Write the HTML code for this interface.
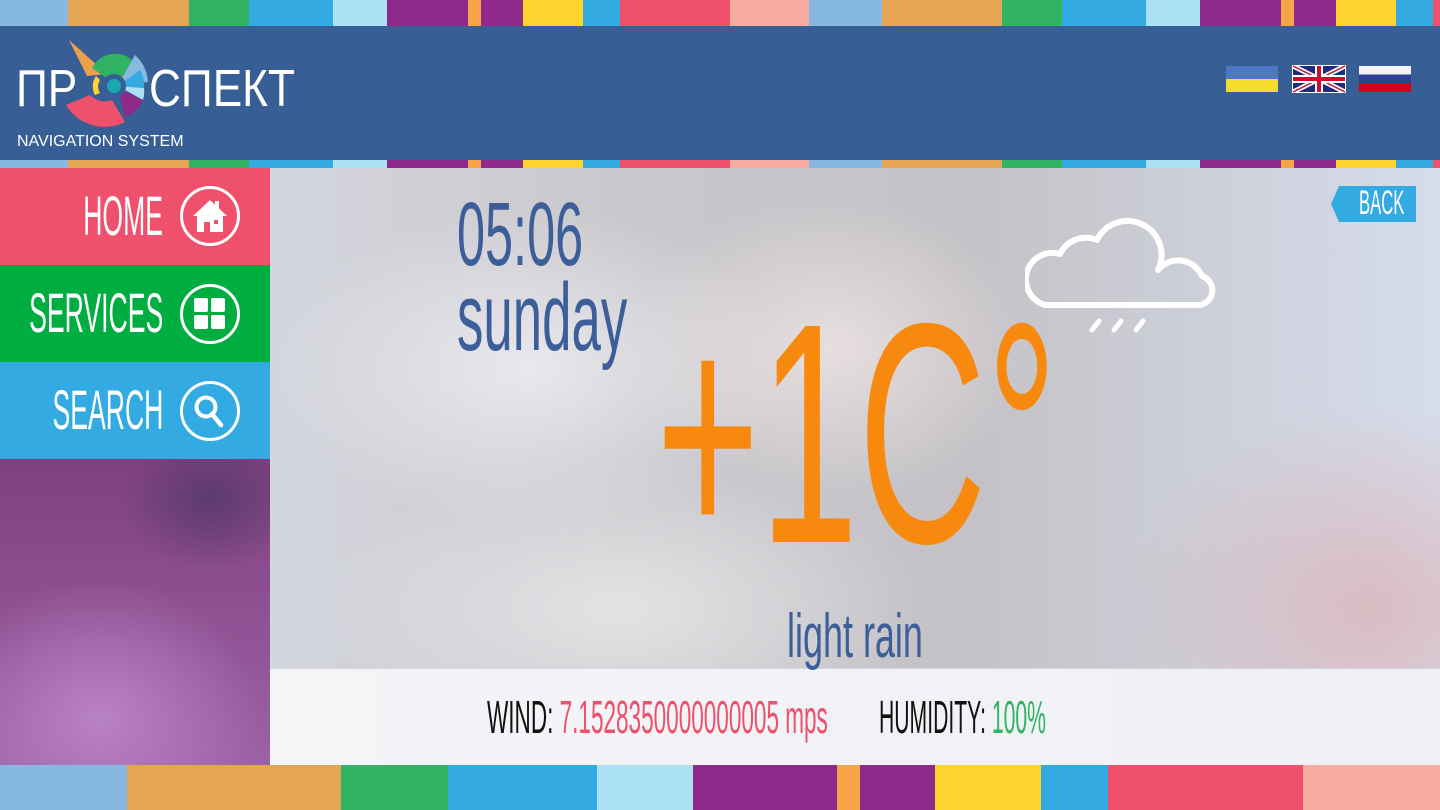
<!DOCTYPE html>
<html><head><meta charset="utf-8"><style>
*{margin:0;padding:0;box-sizing:border-box}
body{width:1440px;height:810px;overflow:hidden;position:relative;font-family:"Liberation Sans Narrow","Liberation Sans",sans-serif;background:#ccc}
.s{position:absolute;height:100%;top:0}
.strip{position:absolute;left:0;width:1440px;overflow:hidden}
.t{position:absolute;white-space:nowrap;line-height:1}
</style></head><body>
<div class="strip" style="top:0;height:26px">
<div class="s" style="left:0;width:68px;background:#86b8e0"></div><div class="s" style="left:68px;width:121px;background:#e6a553"></div><div class="s" style="left:189px;width:60px;background:#32b363"></div><div class="s" style="left:249px;width:84px;background:#34aae2"></div><div class="s" style="left:333px;width:54px;background:#ace0f5"></div><div class="s" style="left:387px;width:81px;background:#8f2a8a"></div><div class="s" style="left:468px;width:13px;background:#f7a347"></div><div class="s" style="left:481px;width:42px;background:#8f2a8a"></div><div class="s" style="left:523px;width:60px;background:#fed52f"></div><div class="s" style="left:583px;width:37px;background:#34aae2"></div><div class="s" style="left:620px;width:110px;background:#ef506b"></div><div class="s" style="left:730px;width:79px;background:#f7aba1"></div><div class="s" style="left:809px;width:73px;background:#86b8e0"></div><div class="s" style="left:882px;width:120px;background:#e6a553"></div><div class="s" style="left:1002px;width:60px;background:#32b363"></div><div class="s" style="left:1062px;width:84px;background:#34aae2"></div><div class="s" style="left:1146px;width:54px;background:#ace0f5"></div><div class="s" style="left:1200px;width:81px;background:#8f2a8a"></div><div class="s" style="left:1281px;width:13px;background:#f7a347"></div><div class="s" style="left:1294px;width:42px;background:#8f2a8a"></div><div class="s" style="left:1336px;width:60px;background:#fed52f"></div><div class="s" style="left:1396px;width:37px;background:#34aae2"></div><div class="s" style="left:1433px;width:7px;background:#ef506b"></div>
</div>
<div class="strip" style="top:160px;height:8px" id="s2"></div>
<div style="position:absolute;top:26px;left:0;width:1440px;height:134px;background:#375f96"></div>
<!-- logo -->
<svg style="position:absolute;left:60px;top:36px" width="100" height="92" viewBox="60 36 100 92">
<path d="M69 40 L87 76 L107 74 Z" fill="#f7a347" opacity=".95"/>
<path d="M92 68 A26 26 0 0 1 140 72 L115 84 Z" fill="#32b363"/>
<path d="M135 55 A40 40 0 0 1 148 82 L118 85 Z" fill="#86b8e0"/>
<path d="M140 70 A30 30 0 0 1 144 88 L118 86 Z" fill="#34aae2"/>
<path d="M118 86 L144 88 A30 30 0 0 1 143 100 Z" fill="#ace0f5"/>
<path d="M118 88 L143 100 A30 30 0 0 1 125 117 Z" fill="#8f2a8a"/>
<path d="M66 105 A45 45 0 0 0 125 122 L112 100 A20 20 0 0 1 90 95 Z" fill="#ef506b"/>
<path d="M96 76 A18 18 0 0 0 95 95 L100 93 A12 12 0 0 1 100 80 Z" fill="#fed52f"/>
<circle cx="114" cy="86" r="12" fill="#375f96"/><circle cx="114" cy="86" r="7" fill="#1aa8b0"/>
</svg>
<div class="t" style="left:16px;top:63px;color:#fff;font-family:'Liberation Sans',sans-serif;font-size:52px;transform:scaleX(.85);transform-origin:left">ПР</div>
<div class="t" style="left:149px;top:63px;color:#fff;font-family:'Liberation Sans',sans-serif;font-size:52px;transform:scaleX(.85);transform-origin:left">СПЕКТ</div>
<div class="t" style="left:17px;top:134px;color:#fff;font-family:'Liberation Sans',sans-serif;font-size:16px">NAVIGATION SYSTEM</div>
<!-- flags -->
<div style="position:absolute;left:1226px;top:66px;width:52px;height:26px;background:linear-gradient(#4c78c5 50%,#f4dc2c 50%)"></div>
<svg style="position:absolute;left:1292px;top:65px" width="54" height="28" viewBox="0 0 54 28"><rect width="54" height="28" fill="#fff"/><rect x="1" y="1" width="52" height="26" fill="#1f2a78"/><path d="M1 1L53 27M53 1L1 27" stroke="#fff" stroke-width="5"/><path d="M1 1L53 27M53 1L1 27" stroke="#c8102e" stroke-width="1.5"/><path d="M27 1V27M1 14H53" stroke="#fff" stroke-width="8"/><path d="M27 1V27M1 14H53" stroke="#c8102e" stroke-width="4"/></svg>
<div style="position:absolute;left:1359px;top:66px;width:52px;height:26px;background:linear-gradient(#f3f3f3 33%,#313e96 33%,#313e96 66%,#d9001c 66%)"></div>
<!-- main bg -->
<div style="position:absolute;left:270px;top:168px;width:1170px;height:500px;background:radial-gradient(ellipse 200px 150px at 560px 180px,rgba(235,225,225,.9),transparent),radial-gradient(ellipse 250px 200px at 1100px 440px,rgba(220,180,185,.8),transparent),radial-gradient(ellipse 260px 160px at 260px 200px,rgba(235,235,240,.9),transparent),radial-gradient(ellipse 300px 150px at 350px 440px,rgba(230,230,232,.9),transparent),linear-gradient(90deg,#d4d6de 0%,#c9c8cc 30%,#c4c2c6 60%,#cfd3de 85%,#d6dcea 100%)"></div>
<div style="position:absolute;left:270px;top:668px;width:1170px;height:97px;background:linear-gradient(90deg,#f4f5f7,#eef0f6);border-top:1px solid #d5d5d8"></div>
<!-- sidebar -->
<div style="position:absolute;left:0;top:168px;width:270px;height:97px;background:#ef506b"></div>
<div style="position:absolute;left:0;top:265px;width:270px;height:97px;background:#00ad40"></div>
<div style="position:absolute;left:0;top:362px;width:270px;height:97px;background:#34aae2"></div>
<div style="position:absolute;left:0;top:459px;width:270px;height:306px;background:radial-gradient(ellipse 90px 70px at 210px 40px,#5c3a72,transparent),radial-gradient(ellipse 160px 140px at 100px 260px,#b982c2,transparent),linear-gradient(#80407e,#9c62a6)"></div>
<div class="t" style="right:1277px;top:188px;color:#fff;font-size:56px;transform:scaleX(.475);transform-origin:right">HOME</div>
<div class="t" style="right:1277px;top:285px;color:#fff;font-size:56px;transform:scaleX(.475);transform-origin:right">SERVICES</div>
<div class="t" style="right:1277px;top:382px;color:#fff;font-size:56px;transform:scaleX(.475);transform-origin:right">SEARCH</div>
<svg style="position:absolute;left:179px;top:185px" width="62" height="62"><circle cx="31" cy="31" r="28.5" fill="none" stroke="#fff" stroke-width="3"/><path d="M14 31L31 15L48 31Z" fill="#fff"/><rect x="36" y="16" width="4" height="9" fill="#fff"/><path d="M18 30H44V47H18Z" fill="#fff"/><rect x="25" y="37" width="6" height="10" fill="#ef506b"/><rect x="35" y="35" width="4" height="4" fill="#ef506b"/></svg>
<svg style="position:absolute;left:179px;top:283px" width="62" height="62"><circle cx="31" cy="31" r="28.5" fill="none" stroke="#fff" stroke-width="3"/><rect x="15" y="15" width="14" height="14" rx="2" fill="#fff"/><rect x="32" y="15" width="14" height="14" rx="2" fill="#fff"/><rect x="15" y="32" width="14" height="14" rx="2" fill="#fff"/><rect x="32" y="32" width="14" height="14" rx="2" fill="#fff"/></svg>
<svg style="position:absolute;left:179px;top:380px" width="62" height="62"><circle cx="31" cy="31" r="28.5" fill="none" stroke="#fff" stroke-width="3"/><circle cx="27" cy="27" r="9.5" fill="none" stroke="#fff" stroke-width="4"/><path d="M33 34L42 45" stroke="#fff" stroke-width="4.5" stroke-linecap="round"/></svg>
<!-- weather -->
<div class="t" style="left:457px;top:190px;color:#3d5f99;font-size:90px;transform:scaleX(.56);transform-origin:left">05:06</div>
<div class="t" style="left:457px;top:270px;color:#3d5f99;font-size:96px;transform:scaleX(.55);transform-origin:left">sunday</div>
<div class="t" style="left:656px;top:277px;color:#f7890f;font-size:314px;transform:scaleX(.565);transform-origin:left">+1C°</div>
<div class="t" style="left:787px;top:606px;color:#3d5f99;font-size:62px;transform:scaleX(.58);transform-origin:left">light rain</div>
<svg style="position:absolute;left:1025px;top:212px" width="196" height="130"><path d="M20 93H175A15 15 0 0 0 177 64A26 26 0 0 0 133 58A32 32 0 0 0 72 28A29 29 0 0 0 35 42A26 26 0 0 0 20 93Z" fill="none" stroke="#fff" stroke-width="6" stroke-linejoin="round"/><path d="M74 109L67 118M96 109L89 118M118 109L111 118" stroke="#fff" stroke-width="5" stroke-linecap="round"/></svg>
<svg style="position:absolute;left:1331px;top:186px" width="85" height="36"><path d="M8 0H85V36H8L0 18Z" fill="#34aae2"/></svg>
<div class="t" style="left:1359px;top:186px;color:#fff;font-size:34px;transform:scaleX(.49);transform-origin:left">BACK</div>
<div class="t" style="left:487px;top:694px;font-size:46px;transform:scaleX(.49);transform-origin:left;color:#111">WIND: <span style="color:#ef506b">7.1528350000000005 mps</span></div>
<div class="t" style="left:879px;top:694px;font-size:46px;transform:scaleX(.46);transform-origin:left;color:#111">HUMIDITY: <span style="color:#32b363">100%</span></div>
<div class="strip" style="top:765px;height:45px">
<div class="s" style="left:0;width:127px;background:#86b8e0"></div><div class="s" style="left:127px;width:214px;background:#e6a553"></div><div class="s" style="left:341px;width:107px;background:#32b363"></div><div class="s" style="left:448px;width:149px;background:#34aae2"></div><div class="s" style="left:597px;width:96px;background:#ace0f5"></div><div class="s" style="left:693px;width:144px;background:#8f2a8a"></div><div class="s" style="left:837px;width:23px;background:#f7a347"></div><div class="s" style="left:860px;width:75px;background:#8f2a8a"></div><div class="s" style="left:935px;width:106px;background:#fed52f"></div><div class="s" style="left:1041px;width:67px;background:#34aae2"></div><div class="s" style="left:1108px;width:195px;background:#ef506b"></div><div class="s" style="left:1303px;width:137px;background:#f7aba1"></div>
</div>
<script>document.getElementById('s2').innerHTML=document.querySelector('.strip').innerHTML;</script>
</body></html>
